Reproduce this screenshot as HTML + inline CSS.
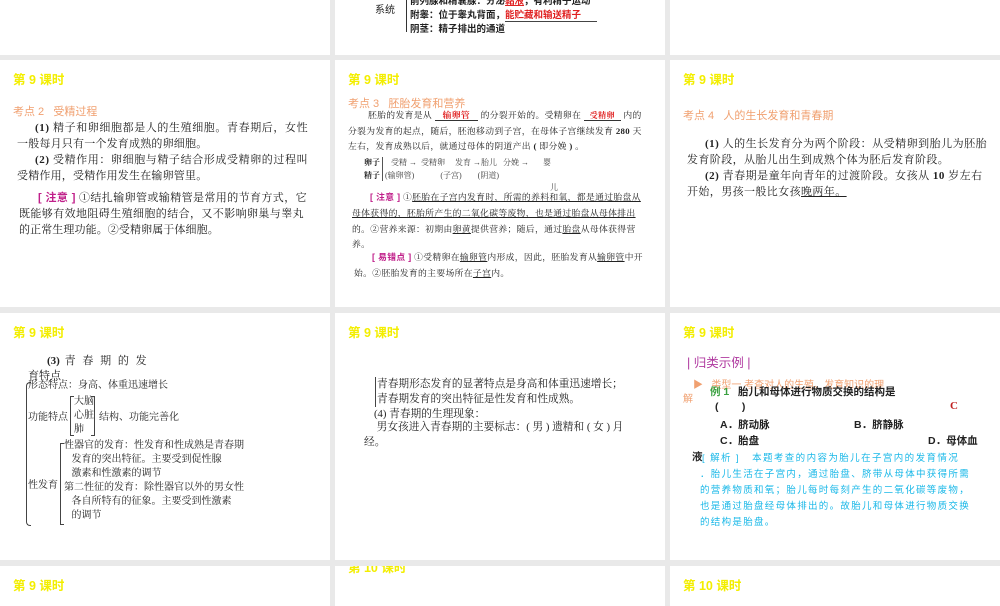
<!DOCTYPE html>
<html><head><meta charset="utf-8"><style>
*{margin:0;padding:0;box-sizing:border-box}
body{width:1000px;height:600px;background:#e9e9e9;position:relative;overflow:hidden;font-family:"Liberation Serif","Noto Serif CJK SC",serif;color:#222}
.p{position:absolute;background:#fff;overflow:hidden}
.a{position:absolute;white-space:nowrap}
.h{font-family:"Liberation Sans","Noto Sans CJK SC",sans-serif;color:#f3ee00;font-size:12.5px;font-weight:bold}
.k{font-family:"Liberation Sans","Noto Sans CJK SC",sans-serif;color:#f0a070;font-size:11px}
.t{font-size:11px;line-height:16px}
.s{font-size:8.8px;line-height:15.5px;letter-spacing:.35px}
.m{color:#c0208a;font-family:"Liberation Sans","Noto Sans CJK SC",sans-serif;font-weight:bold}
.u{text-decoration:underline}
.r{color:#e02020}
</style></head><body>
<!-- row1 -->
<div class="p" style="left:0;top:0;width:330px;height:55px"></div>
<div class="p" style="left:335px;top:0;width:330px;height:55px">
 <div class="a" style="left:40px;top:1px;font-size:10px;font-family:'Liberation Sans','Noto Sans CJK SC',sans-serif">系统</div>
 <div class="a" style="left:71px;top:-6px;width:1px;height:38px;border-left:1px solid #333"></div>
 <div class="a" style="left:75px;top:-5px;font-size:9.5px;font-weight:bold;font-family:'Liberation Sans','Noto Sans CJK SC',sans-serif;line-height:14px">前列腺和精囊腺：分泌<span class="r u">黏液</span>，有利精子运动<br>附睾：位于睾丸背面，<span class="r" style="border-bottom:1px solid #444;padding-right:16px">能贮藏和输送精子</span><br>阴茎：精子排出的通道</div>
</div>
<div class="p" style="left:670px;top:0;width:330px;height:55px"></div>
<!-- row2 -->
<div class="p" style="left:0;top:60px;width:330px;height:247px">
 <div class="a h" style="left:13px;top:9px">第 9 课时</div>
 <div class="a k" style="left:13px;top:43px">考点 2 &nbsp; 受精过程</div>
 <div class="a t" style="left:35px;top:60px;letter-spacing:.6px"><b>(1)</b> 精子和卵细胞都是人的生殖细胞。青春期后，女性</div>
 <div class="a t" style="left:17px;top:76px;letter-spacing:.2px">一般每月只有一个发育成熟的卵细胞。</div>
 <div class="a t" style="left:35px;top:92px;letter-spacing:.6px"><b>(2)</b> 受精作用：卵细胞与精子结合形成受精卵的过程叫</div>
 <div class="a t" style="left:17px;top:108px;letter-spacing:.2px">受精作用，受精作用发生在输卵管里。</div>
 <div class="a t" style="left:38px;top:130px;letter-spacing:.4px"><span class="m">[ 注意 ]</span> ①结扎输卵管或输精管是常用的节育方式，它</div>
 <div class="a t" style="left:19px;top:146px;letter-spacing:.4px">既能够有效地阻碍生殖细胞的结合，又不影响卵巢与睾丸</div>
 <div class="a t" style="left:19px;top:162px;letter-spacing:.1px">的正常生理功能。②受精卵属于体细胞。</div>
</div>
<div class="p" style="left:335px;top:60px;width:330px;height:247px">
 <div class="a h" style="left:13px;top:9px">第 9 课时</div>
 <div class="a k" style="left:13px;top:35px">考点 3 &nbsp; 胚胎发育和营养</div>
 <div class="a s" style="left:33px;top:48px">胚胎的发育是从 <span class="r" style="border-bottom:1px solid #333;padding:0 8px;font-weight:bold">输卵管</span> 的分裂开始的。受精卵在 <span class="r" style="border-bottom:1px solid #333;padding:0 6px;font-weight:bold;font-size:8px">受精卵</span> 内的</div>
 <div class="a s" style="left:13px;top:64px">分裂为发育的起点，随后，胚泡移动到子宫，在母体子宫继续发育 <b>280</b> 天</div>
 <div class="a s" style="left:13px;top:79px">左右，发育成熟以后，就通过母体的阴道产出 <b>(</b> 即分娩 <b>)</b> 。</div>
 <div class="a" style="left:29px;top:96px;font-size:8px;line-height:13px;font-weight:bold">卵子<br>精子</div>
 <div class="a" style="left:47px;top:97px;height:24px;border-left:1px solid #555"></div>
 <div class="a" style="left:50px;top:96px;font-size:8px;line-height:13px;color:#444">&nbsp;&nbsp;&nbsp;受精 → &nbsp;受精卵 &nbsp;&nbsp;&nbsp;&nbsp;发育 →胎儿 &nbsp;&nbsp;分娩 →&nbsp;&nbsp;&nbsp;&nbsp;&nbsp;&nbsp; 婴<br>(输卵管) &nbsp;&nbsp;&nbsp;&nbsp;&nbsp;&nbsp;&nbsp;&nbsp;&nbsp;&nbsp;&nbsp;&nbsp;(子宫) &nbsp;&nbsp;&nbsp;&nbsp;&nbsp;&nbsp;&nbsp;(阴道)</div>
 <div class="a" style="left:215px;top:122px;font-size:8px;color:#444">儿</div>
 <div class="a s" style="left:35px;top:130px"><span class="m">[ 注意 ]</span> ①<span class="u">胚胎在子宫内发育时，所需的养料和氧，都是通过胎盘从</span></div>
 <div class="a s u" style="left:17px;top:146px">母体获得的，胚胎所产生的二氧化碳等废物，也是通过胎盘从母体排出</div>
 <div class="a s" style="left:17px;top:162px">的。②营养来源：初期由<span class="u">卵黄</span>提供营养；随后，通过<span class="u">胎盘</span>从母体获得营</div>
 <div class="a s" style="left:17px;top:177px">养。</div>
 <div class="a s" style="left:37px;top:190px"><span class="m">[ 易错点 ]</span> ①受精卵在<span class="u">输卵管</span>内形成，因此，胚胎发育从<span class="u">输卵管</span>中开</div>
 <div class="a s" style="left:19px;top:206px">始。②胚胎发育的主要场所在<span class="u">子宫</span>内。</div>
</div>
<div class="p" style="left:670px;top:60px;width:330px;height:247px">
 <div class="a h" style="left:13px;top:9px">第 9 课时</div>
 <div class="a k" style="left:13px;top:47px">考点 4 &nbsp; 人的生长发育和青春期</div>
 <div class="a t" style="left:35px;top:76px;letter-spacing:.5px"><b>(1)</b> 人的生长发育分为两个阶段：从受精卵到胎儿为胚胎</div>
 <div class="a t" style="left:17px;top:92px;letter-spacing:.4px">发育阶段，从胎儿出生到成熟个体为胚后发育阶段。</div>
 <div class="a t" style="left:35px;top:108px;letter-spacing:.5px"><b>(2)</b> 青春期是童年向青年的过渡阶段。女孩从 <b>10</b> 岁左右</div>
 <div class="a t" style="left:17px;top:124px;letter-spacing:.4px">开始，男孩一般比女孩<span class="u">晚两年。</span></div>
</div>
<!-- row3 -->
<div class="p" style="left:0;top:313px;width:330px;height:247px">
 <div class="a h" style="left:13px;top:9px">第 9 课时</div>
 <div class="a t" style="left:47px;top:40px;letter-spacing:2px"><b style="letter-spacing:0">(3)</b> 青 春 期 的 发</div>
 <div class="a t" style="left:28px;top:55px">育特点</div>
 <div class="a" style="left:26px;top:69px;width:5px;height:144px;border:1px solid #444;border-right:none;border-radius:4px 0 0 4px"></div>
 <div class="a" style="left:28px;top:66px;font-size:10px;line-height:13px">形态特点：身高、体重迅速增长</div>
 <div class="a" style="left:28px;top:95px;font-size:10px">功能特点</div>
 <div class="a" style="left:70px;top:83px;width:4px;height:40px;border:1px solid #444;border-right:none"></div>
 <div class="a" style="left:74px;top:82px;font-size:10px;line-height:14px">大脑<br>心脏<br>肺</div>
 <div class="a" style="left:91px;top:83px;width:4px;height:40px;border:1px solid #444;border-left:none"></div>
 <div class="a" style="left:99px;top:95px;font-size:10px">结构、功能完善化</div>
 <div class="a" style="left:28px;top:163px;font-size:10px">性发育</div>
 <div class="a" style="left:60px;top:130px;width:4px;height:82px;border:1px solid #444;border-right:none"></div>
 <div class="a" style="left:64px;top:126px;font-size:10px;line-height:14px">性器官的发育：性发育和性成熟是青春期<br>&nbsp;&nbsp;&nbsp;发育的突出特征。主要受到促性腺<br>&nbsp;&nbsp;&nbsp;激素和性激素的调节<br>第二性征的发育：除性器官以外的男女性<br>&nbsp;&nbsp;&nbsp;各自所特有的征象。主要受到性激素<br>&nbsp;&nbsp;&nbsp;的调节</div>
</div>
<div class="p" style="left:335px;top:313px;width:330px;height:247px">
 <div class="a h" style="left:13px;top:9px">第 9 课时</div>
 <div class="a" style="left:40px;top:64px;height:30px;border-left:1px solid #444"></div>
 <div class="a" style="left:42px;top:64px;font-size:10.7px;line-height:15px">青春期形态发育的显著特点是身高和体重迅速增长；<br>青春期发育的突出特征是性发育和性成熟。</div>
 <div class="a" style="left:39px;top:95px;font-size:10.7px;line-height:13px">(4) 青春期的生理现象：<br>&nbsp;男女孩进入青春期的主要标志：( 男 ) 遗精和 ( 女 ) 月</div>
 <div class="a" style="left:29px;top:121px;font-size:10.7px">经。</div>
</div>
<div class="p" style="left:670px;top:313px;width:330px;height:247px;font-family:'Liberation Sans','Noto Sans CJK SC',sans-serif">
 <div class="a h" style="left:13px;top:9px">第 9 课时</div>
 <div class="a" style="left:17px;top:39px;font-size:12.5px;color:#b03aa0">| 归类示例 |</div>
 <div class="a" style="left:23px;top:63px;font-size:10px;color:#f0a070">▶ &nbsp;&nbsp;类型一 考查对人的生殖、发育知识的理</div>
 <div class="a" style="left:13px;top:77px;font-size:10px;color:#f0a070">解</div>
 <div class="a" style="left:40px;top:71px;font-size:10.5px;font-weight:bold"><span style="color:#3aa040">例 1</span> &nbsp;&nbsp;胎儿和母体进行物质交换的结构是</div>
 <div class="a" style="left:45px;top:88px;font-size:10.5px;font-weight:bold">( &nbsp;&nbsp;&nbsp;&nbsp;&nbsp;&nbsp; )</div>
 <div class="a" style="left:280px;top:87px;font-size:11px;font-weight:bold;color:#c02020;font-family:'Liberation Serif',serif">C</div>
 <div class="a" style="left:50px;top:104px;font-size:10.5px;font-weight:bold">A．脐动脉</div>
 <div class="a" style="left:184px;top:104px;font-size:10.5px;font-weight:bold">B．脐静脉</div>
 <div class="a" style="left:50px;top:120px;font-size:10.5px;font-weight:bold">C．胎盘</div>
 <div class="a" style="left:258px;top:120px;font-size:10.5px;font-weight:bold">D．母体血</div>
 <div class="a" style="left:22px;top:136px;font-size:10.5px;font-weight:bold">液</div>
 <div class="a" style="left:32px;top:138px;font-size:9.5px;line-height:16px;color:#1ab8e8;letter-spacing:1.4px">[ 解析 ] &nbsp;&nbsp;本题考查的内容为胎儿在子宫内的发育情况</div>
 <div class="a" style="left:30px;top:154px;font-size:9.5px;line-height:16px;color:#1ab8e8;letter-spacing:1.3px">．胎儿生活在子宫内，通过胎盘、脐带从母体中获得所需<br>的营养物质和氧；胎儿每时每刻产生的二氧化碳等废物，<br>也是通过胎盘经母体排出的。故胎儿和母体进行物质交换<br>的结构是胎盘。</div>
</div>
<!-- row4 -->
<div class="p" style="left:0;top:566px;width:330px;height:40px"><div class="a h" style="left:13px;top:9px">第 9 课时</div></div>
<div class="p" style="left:335px;top:566px;width:330px;height:40px"><div class="a h" style="left:13px;top:-9px">第 10 课时</div></div>
<div class="p" style="left:670px;top:566px;width:330px;height:40px"><div class="a h" style="left:13px;top:9px">第 10 课时</div></div>
</body></html>
